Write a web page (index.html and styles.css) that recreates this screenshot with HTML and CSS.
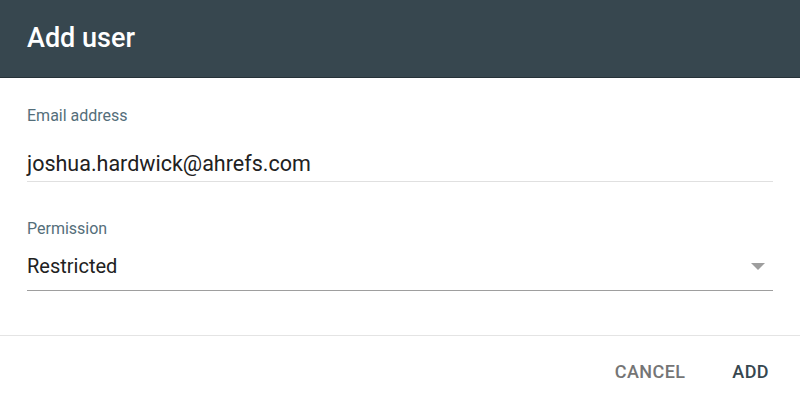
FILE: index.html
```html
<!DOCTYPE html>
<html lang="en">
<head>
    <meta charset="UTF-8">
    <meta name="viewport" content="width=device-width, initial-scale=1.0">
    <title>Add user</title>
    <link rel="stylesheet" href="styles.css">
</head>
<body>
    <div class="dialog">
        <div class="dialog-header">
            <h1 class="dialog-title">Add user</h1>
        </div>
        <div class="dialog-body">
            <div class="field field-email">
                <div class="field-label">Email address</div>
                <div class="field-input">joshua.hardwick@ahrefs.com</div>
            </div>
            <div class="field field-select">
                <div class="field-label">Permission</div>
                <div class="field-input">
                    <span class="select-value">Restricted</span>
                    <svg class="select-arrow" viewBox="0 0 14 7" fill="currentColor">
                        <polygon points="0 0 14 0 7 7"></polygon>
                    </svg>
                </div>
            </div>
        </div>
        <div class="dialog-actions">
            <button class="btn btn-cancel">CANCEL</button>
            <button class="btn btn-add">ADD</button>
        </div>
    </div>
</body>
</html>
```

FILE: styles.css
```css
* {
    margin: 0;
    padding: 0;
    box-sizing: border-box;
}

body {
    font-family: Roboto, "Liberation Sans", Arial, sans-serif;
    background-color: #fff;
    width: 800px;
    height: 403px;
    overflow: hidden;
}

.dialog {
    display: flex;
    flex-direction: column;
}

.dialog-header {
    height: 78px;
    background-color: #37474f;
    border-bottom: 1px solid #263238;
    padding-left: 27px;
    display: flex;
    align-items: center;
}

.dialog-title {
    color: #fff;
    font-size: 27px;
    font-weight: 500;
    line-height: 30px;
    margin-top: -2px;
}

.dialog-body {
    padding: 0 27px;
    border-bottom: 1px solid #e4e4e4;
}

.field-label {
    font-size: 16px;
    line-height: 16px;
    color: #546e7a;
}

.field-input {
    font-size: 20px;
    line-height: 24px;
    color: #212121;
}

.field-email {
    padding-top: 30px;
}

.field-email .field-input {
    font-size: 21.5px;
    margin-top: 28px;
    padding-bottom: 5px;
    border-bottom: 1px solid #e0e0e0;
}

.field-select {
    padding-top: 39px;
    padding-bottom: 44px;
}

.field-select .field-input {
    margin-top: 17px;
    padding-bottom: 12px;
    border-bottom: 1px solid #9e9e9e;
    display: flex;
    align-items: center;
    justify-content: space-between;
}

.select-arrow {
    width: 14px;
    height: 7px;
    color: #9e9e9e;
    margin-right: 8px;
}

.dialog-actions {
    display: flex;
    justify-content: flex-end;
    gap: 47px;
    padding: 26px 31px 0 0;
}

.btn {
    background: none;
    border: none;
    font-family: inherit;
    font-size: 18px;
    font-weight: 500;
    line-height: 20px;
    letter-spacing: 0.4px;
}

.btn-cancel {
    color: #757575;
}

.btn-add {
    color: #37474f;
}
```
